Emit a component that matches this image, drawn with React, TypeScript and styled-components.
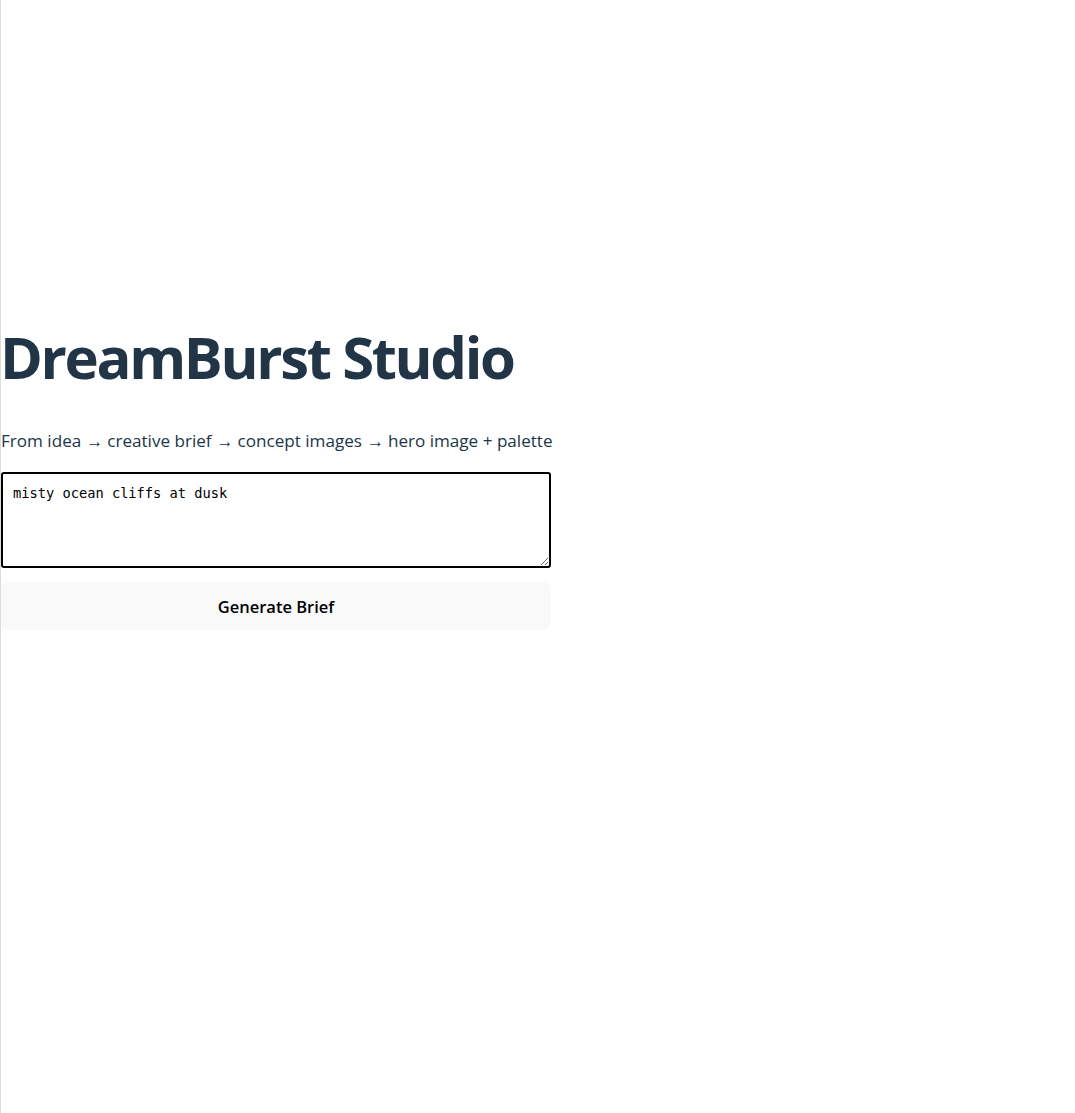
import React from "react";
import styled, { createGlobalStyle } from "styled-components";

const Global = createGlobalStyle`
  html, body { margin: 0; padding: 0; background: #fff; }
  body {
    border-left: 1px solid #dcdcdc;
    min-height: 100vh;
    box-sizing: border-box;
    font-family: "Open Sans", "Noto Sans", sans-serif;
    color: #213547;
  }
`;

const Page = styled.main`
  display: flex;
  flex-direction: column;
  width: 550px;
  padding: 322px 0 0 0;
`;

const Title = styled.h1`
  margin: 0 0 0 -1px;
  font-size: 58px;
  line-height: 70px;
  font-weight: 700;
  letter-spacing: -2.35px;
  color: #213547;
  white-space: nowrap;
`;

const Subtitle = styled.p`
  margin: 35px 0 0 0;
  font-size: 17.1px;
  line-height: 27px;
  color: #213547;
  white-space: nowrap;
`;

const Prompt = styled.textarea`
  margin-top: 18px;
  height: 96px;
  box-sizing: border-box;
  border: 2px solid #000;
  border-radius: 3px;
  padding: 10px 10px;
  font-family: "DejaVu Sans Mono", "Liberation Mono", monospace;
  font-size: 13.7px;
  line-height: 18px;
  color: #000;
  caret-color: #000;
  resize: vertical;
  outline: none;
`;

const Button = styled.button`
  margin-top: 14px;
  height: 48px;
  border: none;
  border-radius: 8px;
  background: #f9f9f9;
  font-family: "Open Sans", "Noto Sans", sans-serif;
  font-size: 16.5px;
  font-weight: 600;
  color: #000;
  cursor: pointer;
`;

export default function App() {
  return (
    <>
      <Global />
      <Page>
        <Title>DreamBurst Studio</Title>
        <Subtitle>From idea → creative brief → concept images → hero image + palette</Subtitle>
        <Prompt defaultValue="misty ocean cliffs at dusk" autoFocus />
        <Button>Generate Brief</Button>
      </Page>
    </>
  );
}
